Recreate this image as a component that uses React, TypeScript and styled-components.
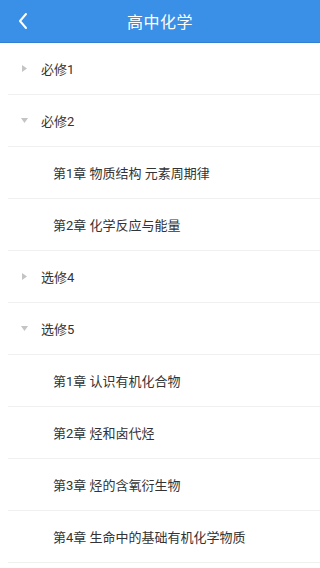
import React from "react";
import { createGlobalStyle, styled } from "styled-components";

type Node = { title: string; open?: boolean; children?: string[] };

const tree: Node[] = [
  { title: "必修1" },
  { title: "必修2", open: true, children: ["第1章 物质结构 元素周期律", "第2章 化学反应与能量"] },
  { title: "选修4" },
  {
    title: "选修5",
    open: true,
    children: [
      "第1章 认识有机化合物",
      "第2章 烃和卤代烃",
      "第3章 烃的含氧衍生物",
      "第4章 生命中的基础有机化学物质",
    ],
  },
];

const GlobalStyle = createGlobalStyle`
  html, body {
    margin: 0;
    padding: 0;
    background: #ffffff;
    font-family: Roboto, "Noto Sans CJK SC", sans-serif;
  }
`;

const Page = styled.div`
  width: 320px;
  min-height: 568px;
  background: #ffffff;
  overflow: hidden;
`;

const Header = styled.header`
  height: 43px;
  background: #3a8fe6;
  border-bottom: 1px solid #3180d4;
  display: flex;
  align-items: center;
  justify-content: center;
  position: relative;
  box-sizing: border-box;
`;

const BackButton = styled.button`
  position: absolute;
  left: 10px;
  top: 8px;
  width: 26px;
  height: 26px;
  padding: 0;
  border: 0;
  background: none;
  display: flex;
  align-items: center;
  justify-content: center;
`;

const Title = styled.h1`
  margin: 0;
  font-size: 16px;
  font-weight: 400;
  color: #ffffff;
  letter-spacing: 0.5px;
`;

const List = styled.ul`
  list-style: none;
  margin: 0;
  padding: 0;
`;

const Row = styled.li<{ $child?: boolean }>`
  height: 52px;
  margin-left: 8px;
  padding-left: ${(p) => (p.$child ? "45px" : "12px")};
  border-bottom: 1px solid #f0f0f0;
  display: flex;
  align-items: center;
  box-sizing: border-box;
  font-size: 13px;
  color: #333333;
`;

const Arrow = styled.span`
  width: 8px;
  height: 8px;
  margin-right: 13px;
  display: flex;
  align-items: center;
  justify-content: center;
`;

const Caret = ({ open }: { open?: boolean }) => (
  <Arrow>
    {open ? (
      <svg width="7" height="5" viewBox="0 0 7 5">
        <polygon points="0,0 7,0 3.5,5" fill="#c4c4c4" />
      </svg>
    ) : (
      <svg width="5" height="7" viewBox="0 0 5 7">
        <polygon points="0,0 5,3.5 0,7" fill="#c4c4c4" />
      </svg>
    )}
  </Arrow>
);

export default function App() {
  return (
    <Page>
      <GlobalStyle />
      <Header>
        <BackButton aria-label="返回">
          <svg width="12" height="18" viewBox="0 0 12 18">
            <polyline
              points="9,2 3,9 9,16"
              fill="none"
              stroke="#ffffff"
              strokeWidth="2"
              strokeLinecap="round"
              strokeLinejoin="round"
            />
          </svg>
        </BackButton>
        <Title>高中化学</Title>
      </Header>
      <List>
        {tree.map((node) => (
          <React.Fragment key={node.title}>
            <Row>
              <Caret open={node.open} />
              {node.title}
            </Row>
            {node.open &&
              node.children?.map((c) => (
                <Row key={c} $child>
                  {c}
                </Row>
              ))}
          </React.Fragment>
        ))}
      </List>
    </Page>
  );
}
